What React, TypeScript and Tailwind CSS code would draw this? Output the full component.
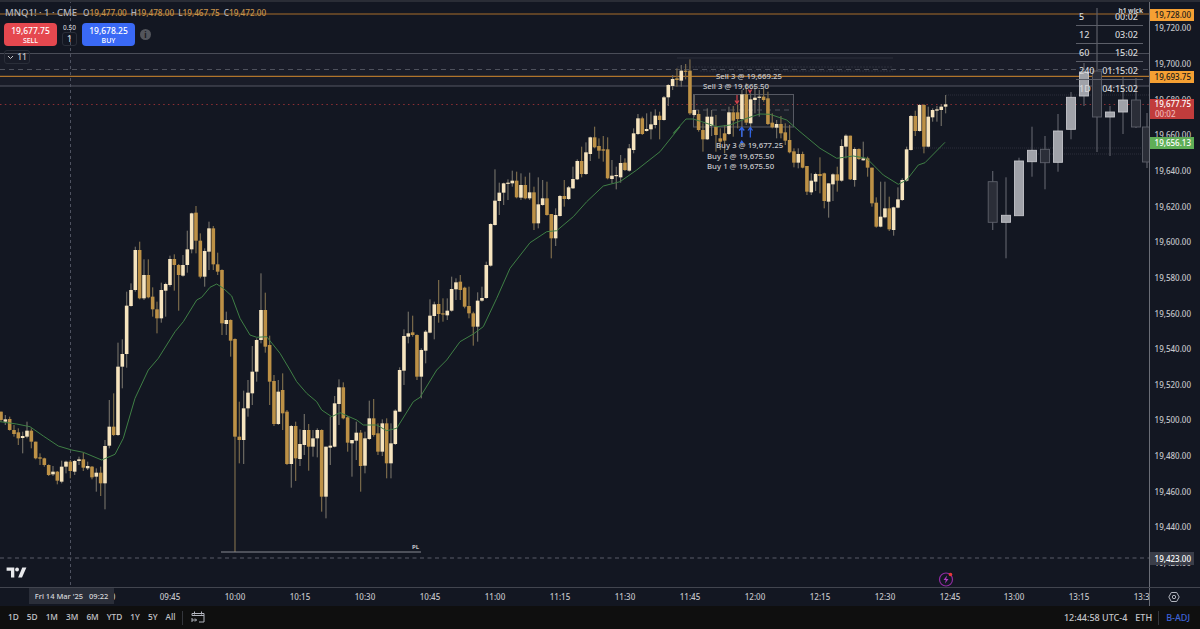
import React from "react";

// [up, bodyTop, bodyBottom, wickTop, wickBottom], read off the chart in 3x pixels
type C = [number, number, number, number, number];

const seg1: C[] = [
  [0,665,690,665,695],[1,688,695,675,705],[0,687,720,680,722],[0,720,732,705,740],[0,727,745,715,765],[1,738,744,725,790],[1,722,740,695,745],[0,722,755,715,775],
  [0,755,805,755,808],[0,802,806,790,825],[0,805,825,803,830],[0,825,855,823,858],[1,845,853,828,858],[0,845,872,843,883],[1,830,875,812,880],[1,815,830,812,850],
  [0,815,843,810,865],[1,813,845,810,855],[1,808,813,800,825],[0,808,833,788,843],[1,828,835,815,840],[0,830,862,828,868],[1,848,860,835,905],[0,848,880,830,918],
  [1,768,880,750,958],[1,710,767,630,775],[0,710,735,610,738],[1,530,735,458,738],[1,492,530,448,595],[1,347,492,305,533],[1,300,348,280,350],[1,180,300,170,305],
  [0,180,325,155,328],[1,255,325,208,330],[0,255,322,208,325],[0,320,358,292,380],[0,358,385,335,430],[1,300,385,278,398],[1,282,302,278,380],[1,207,285,197,290],
  [0,207,225,193,302],[0,225,255,222,362],[1,225,257,195,260],[1,178,225,122,248],[1,70,178,68,190],[0,68,152,48,190],[0,152,260,130,265],[1,183,260,175,290],
  [1,115,185,95,240],[0,115,223,108,240],[0,223,245,188,255],[0,240,400,238,435],[1,390,402,365,435],[0,390,452,388,500],[0,447,740,445,1086],[0,740,750,635,820],
  [1,655,750,602,822],[1,608,655,570,680],[1,545,610,468,645],[1,450,545,445,575],[1,360,450,250,460],[0,360,470,308,488],[0,465,575,437,645],[0,573,702,555,708],
  [1,605,702,570,705],
];

const seg2: C[] = [
  [0,990,1060,940,1110],[0,1055,1212,1050,1215],[1,1098,1212,1095,1283],[0,1098,1195,1085,1263],[1,1152,1197,1108,1218],[1,1110,1155,1062,1185],[0,1110,1160,1092,1232],[1,1135,1160,1110,1190],
  [1,1110,1135,1105,1192],[0,1110,1310,1108,1355],[1,1160,1310,1160,1375],[1,1157,1163,1070,1215],[1,1030,1160,1008,1162],[1,982,1032,958,1095],[0,982,1075,967,1078],[0,1072,1148,1068,1175],
  [1,1140,1150,1140,1250],[1,1118,1142,1085,1200],[0,1118,1218,1110,1295],[1,1135,1217,1115,1240],[1,1075,1137,1022,1140],[0,1075,1125,1017,1130],[0,1120,1175,1090,1185],[1,1090,1175,1078,1188],
  [0,1090,1210,1075,1255],[1,1150,1210,1090,1255],[1,1052,1152,1048,1155],[1,930,1055,922,1055],[1,828,932,808,975],[1,820,830,755,850],[0,817,825,767,830],[0,825,950,823,960],
  [1,870,950,865,1015],[1,815,872,810,910],[1,767,818,718,820],[1,733,768,725,838],[0,732,762,660,788],[0,760,763,715,785],[1,752,766,715,780],[1,687,752,650,755],
  [1,667,688,655,720],[0,665,690,645,720],[0,683,740,680,745],[0,738,760,680,775],[0,760,800,755,857],[1,722,800,697,845],[1,714,722,680,725],[1,615,714,605,716],
  [1,492,617,490,620],[1,422,495,328,497],[1,398,423,368,465],[1,370,398,368,435],[1,368,371,358,420],[1,362,370,332,380],[0,362,412,335,415],[1,375,413,340,420],
  [0,375,415,350,418],[1,397,415,338,420],[0,397,490,380,510],[1,433,490,352,505],[1,415,435,360,437],[0,415,465,365,467],[0,462,535,462,595],[1,465,535,445,558],
  [1,408,468,405,470],[0,408,417,360,440],[1,382,417,378,420],[1,357,385,320,387],[1,303,358,298,360],[0,303,342,260,352],[1,277,342,247,345],[1,232,282,230,303],
  [0,232,262,200,265],[0,258,272,235,296],[0,268,272,228,305],[0,268,355,232,358],[1,347,357,300,370],[1,345,348,320,388],[1,309,352,285,368],[0,308,330,295,333],
  [1,265,332,252,335],[1,220,270,205,280],[1,175,222,162,225],[0,175,222,170,225],[1,207,213,160,215],[1,193,208,155,238],[1,167,195,148,205],[0,167,180,155,238],
  [1,112,180,108,182],[1,75,112,72,138],[1,57,78,45,90],
];

const seg3: C[] = [
  [0,85,90,55,110],[1,62,92,45,110],[0,62,65,42,88],[0,62,190,28,195],[1,180,195,135,200],[0,192,240,180,245],[0,240,268,220,305],[1,200,268,175,270],
  [1,200,228,180,258],[0,230,255,195,305],[0,265,275,235,300],[0,250,272,225,310],[1,187,252,170,255],[0,187,212,168,260],[0,187,207,163,235],[1,133,207,120,260],
  [0,133,218,100,225],[1,148,220,130,250],[1,143,150,110,190],[1,140,143,120,200],[0,140,150,115,155],[0,145,222,125,225],
];

const seg4: C[] = [
  [0,98,112,70,115],[1,102,113,90,145],[0,102,130,78,145],[0,127,152,100,165],[0,150,187,105,190],[0,184,218,175,232],[1,192,218,175,235],[0,192,233,185,235],
  [0,228,305,228,315],[1,272,307,250,315],[1,252,275,248,303],[0,252,258,202,310],[0,250,333,248,355],[1,280,335,280,383],[1,253,283,250,333],[0,253,272,230,305],
  [1,168,272,148,275],[1,137,170,133,205],[0,137,268,137,270],[1,177,270,172,290],[0,177,207,175,210],[1,205,211,155,212],[0,205,233,200,260],[0,233,340,233,350],
  [0,338,410,322,413],[1,380,410,275,412],[1,355,382,275,385],[0,355,418,320,423],[1,352,420,350,437],[1,328,353,292,355],[1,270,330,265,333],[1,178,272,170,275],
  [1,78,180,75,182],[0,78,123,62,138],[1,45,123,42,125],[0,45,170,42,190],[1,80,170,50,172],[1,60,82,55,95],[1,58,62,48,95],[1,50,60,42,108],[1,43,50,15,70],
];

const conv = (s: C[], y0: number): C[] =>
  s.map(([u, a, b, c, d]) => [u, y0 + a / 3, y0 + b / 3, y0 + c / 3, y0 + d / 3]);
const candles = [...conv(seg1, 190), ...conv(seg2, 60), ...conv(seg3, 50), ...conv(seg4, 90)];
const barX = (i: number) => 1 + i * 4.333;

const toPts = (pts: number[][], x0: number, y0: number) =>
  pts.map(([x, y]) => `${(x0 + x / 3).toFixed(1)},${(y0 + y / 3).toFixed(1)}`).join(" ");

const maLine = [
  toPts([[0,695],[50,702],[90,710],[130,738],[175,768],[215,780],[250,787],[305,810],[345,793],[370,745],[405,625],[445,540],[475,505],[525,425],[550,395],[590,330],[605,322],[630,292],[650,282],[670,295],[695,318],[720,385],[750,435],[770,442],[800,440],[840,490]], 0, 190),
  toPts([[0,880],[30,930],[50,965],[80,1000],[110,1025],[125,1050],[155,1070],[180,1058],[230,1080],[250,1095],[290,1095],[320,1112],[350,1105],[400,1025],[420,1012],[470,930],[500,900],[540,845],[580,822],[610,800],[650,715],[690,625],[750,548],[800,515],[830,512],[880,470],[920,425],[970,378],[1020,365],[1070,330],[1140,275],[1200,200]], 280, 60),
  toPts([[40,250],[78,207],[100,207],[125,215],[170,230],[210,225],[260,205],[290,195]], 660, 50),
  toPts([[0,72],[30,73],[80,90],[120,125],[180,175],[230,205],[280,198],[320,205],[370,255],[415,283],[440,270],[475,225],[495,218],[555,157]], 760, 90),
].join(" ");

// higher timeframe candles on the right: x, bodyTop, bodyBottom, wickTop, wickBottom, light
const htf: [number, number, number, number, number, boolean][] = [
  [992.7,181.7,222.3,171,230,false],[1006,215.3,222.3,177.3,258.3,true],[1019,161,215.7,157.7,216,true],[1032,150.3,161.7,126.7,176.7,true],
  [1045,149.3,162.7,136,189.3,false],[1058,131,162.3,114,171.7,true],[1071,97.3,129.3,92,139.3,true],[1084,72,96,63,106,true],
  [1097,71,117,8,152,false],[1110,112,117,106,156,true],[1123,100,112,77,134,true],[1136,100,127,78,128,false],[1147,127,162,113,168,false],
];

const tradeLabels = [
  { x: 716, y: 79, t: "Sell 3 @ 19,669.25" },
  { x: 703, y: 89, t: "Sell 3 @ 19,665.50" },
  { x: 716, y: 148, t: "Buy 3 @ 19,677.25" },
  { x: 707, y: 159, t: "Buy 2 @ 19,675.50" },
  { x: 707, y: 169, t: "Buy 1 @ 19,675.50" },
];

function ChartCanvas() {
  return (
    <svg width="1149" height="585" viewBox="0 2 1149 585" className="block">
      <rect x="0" y="53" width="1149" height="33" fill="#191c28" />
      <line x1="0" x2="1149" y1="53.5" y2="53.5" stroke="#4a4d58" />
      <line x1="0" x2="1149" y1="69.5" y2="69.5" stroke="#4e515c" strokeDasharray="5 4" />
      <line x1="0" x2="1149" y1="86" y2="86" stroke="#545762" />
      <line x1="0" x2="1149" y1="14" y2="14" stroke="#a96f2a" />
      <line x1="0" x2="1149" y1="76.3" y2="76.3" stroke="#b0742c" strokeWidth="1.2" />
      <line x1="0" x2="1149" y1="104.5" y2="104.5" stroke="#8c2f34" strokeDasharray="1.5 3.3" />
      <line x1="0" x2="1149" y1="558" y2="558" stroke="#5a5d68" strokeDasharray="4 3.5" />
      <line x1="70.5" x2="70.5" y1="0" y2="587" stroke="#4e5260" strokeDasharray="3 3" />

      <g stroke="#2c2f3a">
        <line x1="677" x2="893" y1="58" y2="58" />
        <line x1="677" x2="893" y1="67" y2="67" strokeDasharray="2 1" />
        <line x1="700" x2="893" y1="71" y2="71" strokeDasharray="2 1" />
        <line x1="946" x2="1149" y1="95" y2="95" strokeDasharray="1 1" />
        <line x1="910" x2="1149" y1="148" y2="148" strokeDasharray="1 1" />
        <line x1="1030" x2="1149" y1="154" y2="154" strokeDasharray="1 1" />
      </g>

      <rect x="693.5" y="94.5" width="100" height="32.5" fill="#ffffff" fillOpacity="0.03" stroke="#565963" />
      <line x1="694" x2="793" y1="110" y2="110" stroke="#4e515c" strokeDasharray="5 4" />

      {htf.map(([x, a, b, c, d, light]) => (
        <g key={x}>
          <rect x={x - 0.6} y={c} width="1.2" height={d - c} fill="#5b5e68" />
          <rect x={x - 4.5} y={a} width="9" height={b - a} fill={light ? "#a0a2a9" : "#2b2e38"} stroke={light ? "#c4c5ca" : "#5e616b"} strokeWidth="0.9" />
        </g>
      ))}

      {candles.map(([up, a, b, c, d], i) => (
        <g key={i}>
          <rect x={barX(i) - 0.6} y={c} width="1.2" height={d - c} fill={up ? "#6d6a63" : "#7a6a4a"} />
          <rect x={barX(i) - 1.8} y={a} width="3.6" height={Math.max(b - a, 1.2)} fill={up ? "#f6e4bf" : "#bd9146"} />
        </g>
      ))}

      <polyline points={maLine} fill="none" stroke="#3f7f45" strokeWidth="1" />

      <line x1="221" x2="421" y1="552" y2="552" stroke="#8a8c93" />
      <text x="412" y="549" fill="#c4c5ca" fontSize="6" fontWeight="700" fontFamily="'Noto Sans', sans-serif">PL</text>

      {/* fill arrows */}
      <path d="M737 95v8M735 100.500l2 3 2-3" fill="none" stroke="#d8434b" strokeWidth="1.2" />
      <path d="M748.500 89.500l1.500 3 1.500-3" fill="none" stroke="#d8434b" strokeWidth="1.4" />
      <path d="M741.800 137v-9.500M739.300 130.500l2.500-3 2.500 3" fill="none" stroke="#2f66f0" strokeWidth="1.3" />
      <path d="M750.300 137.500v-9M748 130.500l2.300-3 2.300 3" fill="none" stroke="#2f66f0" strokeWidth="1.2" />
      <path d="M739.800 143l2-3 2 3z" fill="#2f66f0" />

      {tradeLabels.map((l) => (
        <text key={l.t + l.y} x={l.x} y={l.y} fill="#c9cacd" fontSize="7.800" fontWeight="500" fontFamily="'Noto Sans', sans-serif">{l.t}</text>
      ))}
    </svg>
  );
}

function Legend() {
  const ohlc = [["O", "19,477.00"], ["H", "19,478.00"], ["L", "19,467.75"], ["C", "19,472.00"]];
  return (
    <div className="absolute left-[5px] top-[5px] flex flex-col items-start">
      <div className="flex h-[12px] items-center gap-[4px] text-[8.200px] font-medium leading-none">
        <span className="mr-[2px] text-[9.500px] text-[#b2b5be]">MNQ1! · 1 · CME</span>
        {ohlc.map(([k, v]) => (
          <span key={k} className="text-[#c6924a]">
            <span className="text-[#b2b5be]">{k}</span>{v}
          </span>
        ))}
      </div>
      <div className="-ml-[1px] mt-[4px] flex items-center">
        <div className="flex h-[23px] w-[53px] flex-col items-center justify-center rounded-[4px] bg-[#e5484f] font-medium text-white">
          <span className="text-[8.500px] leading-[11px]">19,677.75</span>
          <span className="text-[7px] leading-[9px]">SELL</span>
        </div>
        <div className="mx-[5px] flex w-[15px] flex-col items-center font-medium text-[#c9cacd]">
          <span className="text-[6.500px] leading-[9px]">0.50</span>
          <span className="flex h-[14px] w-[15px] items-center justify-center rounded-[3px] border border-[#2a2e39] text-[8.500px] text-[#d8d9dc]">1</span>
        </div>
        <div className="flex h-[23px] w-[53px] flex-col items-center justify-center rounded-[4px] bg-[#3a69f5] font-medium text-white">
          <span className="text-[8.500px] leading-[11px]">19,678.25</span>
          <span className="text-[7px] leading-[9px]">BUY</span>
        </div>
        <span className="ml-[5px] flex h-[11px] w-[11px] items-center justify-center rounded-full bg-[#53555c] text-[8px] font-bold leading-none text-[#17191f]">i</span>
      </div>
      <div className="-ml-[1px] mt-[4px] flex h-[14px] w-[26px] items-center justify-center gap-[3px] rounded-[3px] border border-[#2a2e39] text-[8.500px] font-medium text-[#c9cacd]">
        <svg width="7" height="5" viewBox="0 0 7 5"><path d="M1 1l2.500 2.500L6 1" fill="none" stroke="#c9cacd" /></svg>
        <span>11</span>
      </div>
    </div>
  );
}

function CountdownTable() {
  const rows = [["5", "00:02"], ["12", "03:02"], ["60", "15:02"], ["240", "01:15:02"], ["1D", "04:15:02"]];
  return (
    <div className="absolute right-[6px] top-[4px] w-[67px] text-[9px] font-medium text-[#d5d6d9]">
      <div className="h-[2px] pt-[2px] text-right text-[6.500px] font-bold leading-[6px] text-[#c9cacd]">h1 wick</div>
      {rows.map(([tf, left], i) => (
        <div key={tf} className={`flex h-[18px] items-center justify-between pl-[3px] pr-[5px] ${i < 4 ? "border-b border-[#5c5f69]" : ""}`}>
          <span>{tf}</span>
          <span>{left}</span>
        </div>
      ))}
    </div>
  );
}

const yLabels = [
  [19720, 28], [19700, 64], [19680, 100], [19660, 135], [19640, 171], [19620, 207], [19600, 242], [19580, 278],
  [19560, 314], [19540, 349], [19520, 385], [19500, 420], [19480, 456], [19460, 492], [19440, 527], [19420, 563],
];

function PriceTag({ top, className, children }: { top: number; className: string; children: React.ReactNode }) {
  return (
    <div className={`absolute left-0 w-[44px] pr-[3px] text-right ${className}`} style={{ top: top - 2 }}>
      {children}
    </div>
  );
}

function PriceAxis() {
  return (
    <div className="relative h-[585px] w-[51px] border-l border-[#6a6d76] bg-[#131722] text-[8px] font-medium leading-[12px] text-[#c4c5ca]">
      {yLabels.map(([p, y]) => (
        <span key={p} className="absolute right-[9px]" style={{ top: y - 8 }}>
          {p.toLocaleString("en-US")}.00
        </span>
      ))}
      <PriceTag top={9} className="h-[12px] bg-[#f5a033] text-[#1a1a1a]">19,728.00</PriceTag>
      <PriceTag top={71} className="h-[12px] bg-[#f5a033] text-[#1a1a1a]">19,693.75</PriceTag>
      <PriceTag top={99} className="h-[20px] bg-[#c13c3c] leading-[10px] text-white">
        19,677.75
        <div className="pl-[5px] text-left text-[#f1b9b9]">00:02</div>
      </PriceTag>
      <PriceTag top={137} className="h-[12px] bg-[#5fae57] text-white">19,656.13</PriceTag>
      <PriceTag top={552} className="h-[13px] bg-[#3a3d48] leading-[13px] text-white">19,423.00</PriceTag>
    </div>
  );
}

const timeLabels = [
  ["09:30", 105], ["09:45", 170], ["10:00", 235], ["10:15", 300], ["10:30", 365], ["10:45", 430], ["11:00", 495], ["11:15", 560],
  ["11:30", 625], ["11:45", 690], ["12:00", 755], ["12:15", 820], ["12:30", 885], ["12:45", 950], ["13:00", 1014], ["13:15", 1079], ["13:30", 1144],
] as const;

function TimeAxis() {
  return (
    <div className="flex h-[19px] border-t border-[#42454f] bg-[#131722]">
      <div className="relative h-full w-[1149px] overflow-hidden text-[8px] font-medium leading-[17px] text-[#c4c5ca]">
        {timeLabels.map(([t, x]) => (
          <span key={t} className="absolute top-0 -translate-x-1/2" style={{ left: x }}>{t}</span>
        ))}
        <div className="absolute left-[29px] top-0 flex h-[16px] w-[85px] items-center justify-center gap-[6px] bg-[#2a2e39] text-[7.500px] text-[#d8d9dc]">
          <span>Fri 14 Mar '25</span>
          <span>09:22</span>
        </div>
      </div>
      <div className="flex w-[51px] items-center justify-center border-l border-[#6a6d76]">
        <svg width="12" height="12" viewBox="0 0 12 12" fill="none" stroke="#b2b5be" className="mr-[2px]">
          <path d="M3.300 1.500h5.400L11.200 6 8.700 10.500H3.300L.8 6z" />
          <circle cx="6" cy="6" r="1.700" />
        </svg>
      </div>
    </div>
  );
}

function BottomBar() {
  const ranges = ["1D", "5D", "1M", "3M", "6M", "YTD", "1Y", "5Y", "All"];
  return (
    <div className="flex h-[23px] items-center bg-[#0f0f0f] pl-[8px] pr-[10px] text-[9px] font-medium text-[#c4c5ca]">
      <div className="flex items-center gap-[8px] text-[8.300px]">
        {ranges.map((r) => <span key={r}>{r}</span>)}
      </div>
      <span className="ml-[7px] h-[14px] w-px bg-[#34363c]" />
      <svg width="14" height="13" viewBox="0 0 14 13" fill="none" stroke="#b2b5be" className="ml-[8px]">
        <path d="M1 4.500V2.500h12v8.500H8M3.500 .5v3M10.500 .5v3M1 4.500h12M1 7v4M1 9h4.500M4 7.500l1.500 1.500L4 10.500" />
      </svg>
      <div className="ml-auto flex items-center">
        <span>12:44:58 UTC-4</span>
        <span className="ml-[8px]">ETH</span>
        <span className="ml-[6px] h-[14px] w-px bg-[#34363c]" />
        <span className="ml-[7px] text-[#3f63d8]">B-ADJ</span>
      </div>
    </div>
  );
}

export default function App() {
  return (
    <div className="h-[629px] w-[1200px] overflow-hidden bg-[#131722] font-['Noto_Sans',sans-serif]">
      <div className="h-[2px] bg-[#2a2d36]" />
      <div className="flex">
        <div className="relative w-[1149px]">
          <ChartCanvas />
          <Legend />
          <CountdownTable />
          {/* TradingView mark */}
          <svg width="21" height="11" viewBox="0 0 36 20" fill="#e8e9ec" className="absolute left-[6px] top-[565px]">
            <path d="M14 19H8V7H0V1h14zM28 19h-7L28.500 1H36z" />
            <circle cx="19" cy="4.500" r="3.500" />
          </svg>
          {/* lightning marker */}
          <svg width="16" height="16" viewBox="0 0 16 16" className="absolute left-[938px] top-[569px]">
            <circle cx="8" cy="8.500" r="6.500" fill="none" stroke="#8e2ba0" strokeWidth="1.200" />
            <path d="M9 4.500L5.500 9h2.300L7 12.500 10.500 8H8.200z" fill="#b23cc4" />
            <circle cx="12.500" cy="3.500" r="1.800" fill="#e5383b" />
          </svg>
        </div>
        <PriceAxis />
      </div>
      <TimeAxis />
      <BottomBar />
    </div>
  );
}
